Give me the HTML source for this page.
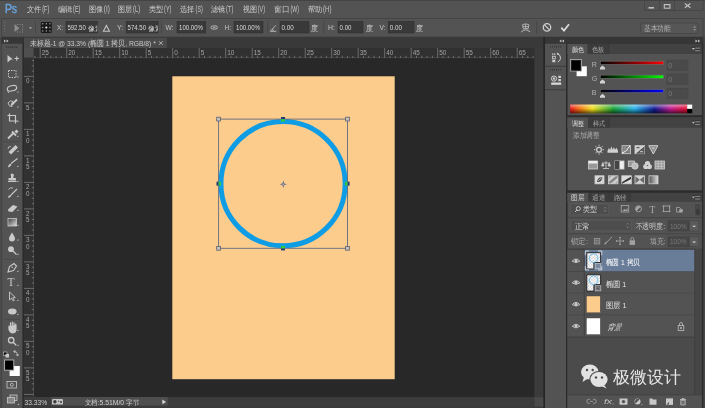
<!DOCTYPE html>
<html><head><meta charset="utf-8">
<style>
html,body{margin:0;padding:0;width:705px;height:408px;overflow:hidden;background:#535353;}
svg{display:block;will-change:transform;}
text{font-family:"Liberation Sans",sans-serif;}
</style></head><body>
<svg width="705" height="408" viewBox="0 0 705 408">
<rect x="0" y="0" width="705" height="408" fill="#535353"/>
<rect x="0" y="0" width="705" height="0.8" fill="#404040"/>
<text x="4.9" y="12.6" font-size="12.6" fill="#68a3dc" textLength="12.2" lengthAdjust="spacingAndGlyphs" stroke="#68a3dc" stroke-width="0.45">Ps</text>
<text x="26.9" y="11.9" font-size="7.9" fill="#cdcdcd" textLength="14.4" lengthAdjust="spacingAndGlyphs">文件</text>
<text x="42.2" y="12.1" font-size="8.2" fill="#c8c8c8" textLength="7.2" lengthAdjust="spacingAndGlyphs">(F)</text>
<text x="57.6" y="11.9" font-size="7.9" fill="#cdcdcd" textLength="14.6" lengthAdjust="spacingAndGlyphs">编辑</text>
<text x="73.1" y="12.1" font-size="8.2" fill="#c8c8c8" textLength="7.2" lengthAdjust="spacingAndGlyphs">(E)</text>
<text x="88.60000000000001" y="11.9" font-size="7.9" fill="#cdcdcd" textLength="14.3" lengthAdjust="spacingAndGlyphs">图像</text>
<text x="103.8" y="12.1" font-size="8.2" fill="#c8c8c8" textLength="6.0" lengthAdjust="spacingAndGlyphs">(I)</text>
<text x="118.2" y="11.9" font-size="7.9" fill="#cdcdcd" textLength="14.0" lengthAdjust="spacingAndGlyphs">图层</text>
<text x="133.1" y="12.1" font-size="8.2" fill="#c8c8c8" textLength="7.2" lengthAdjust="spacingAndGlyphs">(L)</text>
<text x="148.79999999999998" y="11.9" font-size="7.9" fill="#cdcdcd" textLength="14.4" lengthAdjust="spacingAndGlyphs">类型</text>
<text x="164.1" y="12.1" font-size="8.2" fill="#c8c8c8" textLength="7.2" lengthAdjust="spacingAndGlyphs">(Y)</text>
<text x="180.29999999999998" y="11.9" font-size="7.9" fill="#cdcdcd" textLength="14.4" lengthAdjust="spacingAndGlyphs">选择</text>
<text x="195.6" y="12.1" font-size="8.2" fill="#c8c8c8" textLength="7.2" lengthAdjust="spacingAndGlyphs">(S)</text>
<text x="211.0" y="11.9" font-size="7.9" fill="#cdcdcd" textLength="14.2" lengthAdjust="spacingAndGlyphs">滤镜</text>
<text x="226.1" y="12.1" font-size="8.2" fill="#c8c8c8" textLength="7.2" lengthAdjust="spacingAndGlyphs">(T)</text>
<text x="242.7" y="11.9" font-size="7.9" fill="#cdcdcd" textLength="14.2" lengthAdjust="spacingAndGlyphs">视图</text>
<text x="257.8" y="12.1" font-size="8.2" fill="#c8c8c8" textLength="7.2" lengthAdjust="spacingAndGlyphs">(V)</text>
<text x="274.2" y="11.9" font-size="7.9" fill="#cdcdcd" textLength="15.5" lengthAdjust="spacingAndGlyphs">窗口</text>
<text x="290.6" y="12.1" font-size="8.2" fill="#c8c8c8" textLength="8.4" lengthAdjust="spacingAndGlyphs">(W)</text>
<text x="307.7" y="11.9" font-size="7.9" fill="#cdcdcd" textLength="14.5" lengthAdjust="spacingAndGlyphs">帮助</text>
<text x="323.1" y="12.1" font-size="8.2" fill="#c8c8c8" textLength="8.4" lengthAdjust="spacingAndGlyphs">(H)</text>
<path d="M644.5 0 V10.5 H703 V0" fill="none" stroke="#474747"/>
<line x1="659.5" y1="0" x2="659.5" y2="10.5" stroke="#474747"/><line x1="674.5" y1="0" x2="674.5" y2="10.5" stroke="#474747"/>
<rect x="648.5" y="7" width="5.5" height="1.6" fill="#c0c0c0"/>
<rect x="664.3" y="4.6" width="5.6" height="3.6" fill="none" stroke="#c0c0c0" stroke-width="1.1"/><rect x="664" y="4.1" width="6.2" height="1" fill="#c0c0c0"/>
<path d="M684.8 3.6 L690.4 7.8 M690.4 3.6 L684.8 7.8" stroke="#c0c0c0" stroke-width="1.2"/>
<rect x="1.5" y="18.5" width="701.5" height="18.5" fill="#535353" stroke="#444" stroke-width="1"/>
<rect x="4" y="22" width="1.2" height="1" fill="#6e6e6e"/>
<rect x="4" y="25" width="1.2" height="1" fill="#6e6e6e"/>
<rect x="4" y="28" width="1.2" height="1" fill="#6e6e6e"/>
<rect x="4" y="31" width="1.2" height="1" fill="#6e6e6e"/>
<path d="M14.5 24 L14.5 32 L19.5 28.2 Z" fill="#8c8c8c"/>
<rect x="17" y="24" width="1" height="1" fill="#8a8a8a"/>
<rect x="19.5" y="24" width="1" height="1" fill="#8a8a8a"/>
<rect x="22" y="24" width="1" height="1" fill="#8a8a8a"/>
<rect x="22" y="26.5" width="1" height="1" fill="#8a8a8a"/>
<rect x="22" y="29" width="1" height="1" fill="#8a8a8a"/>
<rect x="17" y="31.5" width="1" height="1" fill="#8a8a8a"/>
<rect x="19.5" y="31.5" width="1" height="1" fill="#8a8a8a"/>
<rect x="22" y="31.5" width="1" height="1" fill="#8a8a8a"/>
<path d="M29 27.3 L32 27.3 L30.5 29 Z" fill="#b5b5b5"/>
<line x1="35.5" y1="21" x2="35.5" y2="34" stroke="#474747"/>
<rect x="40.8" y="21.9" width="11" height="11.1" rx="1.2" fill="#1a1a1a"/>
<circle cx="42.7" cy="23.8" r="0.75" fill="#9a9a9a"/>
<circle cx="46.3" cy="23.8" r="0.75" fill="#9a9a9a"/>
<circle cx="49.9" cy="23.8" r="0.75" fill="#9a9a9a"/>
<circle cx="42.7" cy="27.45" r="0.75" fill="#9a9a9a"/>
<circle cx="46.3" cy="27.45" r="1.05" fill="#f0f0f0"/>
<circle cx="49.9" cy="27.45" r="0.75" fill="#9a9a9a"/>
<circle cx="42.7" cy="31.1" r="0.75" fill="#9a9a9a"/>
<circle cx="46.3" cy="31.1" r="0.75" fill="#9a9a9a"/>
<circle cx="49.9" cy="31.1" r="0.75" fill="#9a9a9a"/>
<text x="57" y="30.2" font-size="7.2" fill="#c5c5c5" textLength="6" lengthAdjust="spacingAndGlyphs">X:</text>
<text x="117" y="30.2" font-size="7.2" fill="#c5c5c5" textLength="6.2" lengthAdjust="spacingAndGlyphs">Y:</text>
<text x="165.5" y="30.2" font-size="7.2" fill="#c5c5c5" textLength="8" lengthAdjust="spacingAndGlyphs">W:</text>
<text x="224.5" y="30.2" font-size="7.2" fill="#c5c5c5" textLength="6.5" lengthAdjust="spacingAndGlyphs">H:</text>
<text x="328" y="30.2" font-size="7.2" fill="#c5c5c5" textLength="6.8" lengthAdjust="spacingAndGlyphs">H:</text>
<rect x="66" y="21.5" width="31.5" height="11.5" fill="#393939" stroke="#2f2f2f" stroke-width="0.6"/>
<rect x="126.2" y="21.5" width="31.9" height="11.5" fill="#393939" stroke="#2f2f2f" stroke-width="0.6"/>
<rect x="177" y="21.5" width="28.7" height="11.5" fill="#393939" stroke="#2f2f2f" stroke-width="0.6"/>
<rect x="234" y="21.5" width="29" height="11.5" fill="#393939" stroke="#2f2f2f" stroke-width="0.6"/>
<rect x="280" y="21.5" width="29" height="11.5" fill="#393939" stroke="#2f2f2f" stroke-width="0.6"/>
<rect x="338" y="21.5" width="25" height="11.5" fill="#393939" stroke="#2f2f2f" stroke-width="0.6"/>
<rect x="388.3" y="21.5" width="25.7" height="11.5" fill="#393939" stroke="#2f2f2f" stroke-width="0.6"/>
<clipPath id="cx"><rect x="66" y="21" width="31.3" height="13"/></clipPath><clipPath id="cy"><rect x="126.2" y="21" width="31.7" height="13"/></clipPath>
<text x="67.4" y="30.4" font-size="7.8" fill="#dcdcdc" textLength="18.4" lengthAdjust="spacingAndGlyphs">592.50</text>
<text x="87.6" y="30.6" font-size="7.2" fill="#dcdcdc" textLength="14" lengthAdjust="spacingAndGlyphs" clip-path="url(#cx)">像素</text>
<text x="127.6" y="30.4" font-size="7.8" fill="#dcdcdc" textLength="18.4" lengthAdjust="spacingAndGlyphs">574.50</text>
<text x="148.2" y="30.6" font-size="7.2" fill="#dcdcdc" textLength="14" lengthAdjust="spacingAndGlyphs" clip-path="url(#cy)">像素</text>
<text x="179" y="30.4" font-size="7.8" fill="#dcdcdc" textLength="24" lengthAdjust="spacingAndGlyphs">100.00%</text>
<text x="236" y="30.4" font-size="7.8" fill="#dcdcdc" textLength="24" lengthAdjust="spacingAndGlyphs">100.00%</text>
<text x="281.5" y="30.4" font-size="7.8" fill="#dcdcdc" textLength="12.2" lengthAdjust="spacingAndGlyphs">0.00</text>
<text x="339.5" y="30.4" font-size="7.8" fill="#dcdcdc" textLength="12" lengthAdjust="spacingAndGlyphs">0.00</text>
<path d="M103.4 31.3 L106.4 25.4 L109.4 31.3 Z" fill="none" stroke="#c4c4c4" stroke-width="1.1"/>
<line x1="161.5" y1="21" x2="161.5" y2="34" stroke="#474747"/>
<rect x="211" y="26" width="6.4" height="3" rx="1.5" fill="none" stroke="#c4c4c4" stroke-width="0.9"/><line x1="213" y1="27.5" x2="215.4" y2="27.5" stroke="#c4c4c4" stroke-width="0.7"/>
<line x1="267.7" y1="21" x2="267.7" y2="34" stroke="#474747"/>
<path d="M270.3 31.3 L276.3 31.3 M270.3 31.3 L275.8 25.3 M273.2 31.3 A2.8 2.8 0 0 0 272.3 29" fill="none" stroke="#bdbdbd" stroke-width="0.9"/>
<text x="311" y="31" font-size="7.6" fill="#cdcdcd" textLength="7" lengthAdjust="spacingAndGlyphs">度</text>
<line x1="323.8" y1="21" x2="323.8" y2="34" stroke="#474747"/>
<text x="365.5" y="31" font-size="7.6" fill="#cdcdcd" textLength="7" lengthAdjust="spacingAndGlyphs">度</text>
<text x="379.4" y="30.2" font-size="7.2" fill="#c5c5c5" textLength="6" lengthAdjust="spacingAndGlyphs">V:</text>
<text x="389.8" y="30.4" font-size="7.8" fill="#dcdcdc" textLength="12.2" lengthAdjust="spacingAndGlyphs">0.00</text>
<text x="416.1" y="31" font-size="7.6" fill="#cdcdcd" textLength="7" lengthAdjust="spacingAndGlyphs">度</text>
<path d="M522.6 24.6 Q525.7 23.2 528.8 24.6 L528.2 28.8 Q525.7 28 523.2 28.8 Z M522.8 26.6 H528.6 M525.7 23.8 V28.4" fill="none" stroke="#c0c0c0" stroke-width="0.8"/>
<path d="M521.2 32 Q525.7 27.6 530.2 32" fill="none" stroke="#c8c8c8" stroke-width="0.9"/>
<line x1="536.8" y1="21" x2="536.8" y2="34" stroke="#474747"/>
<circle cx="547" cy="27.4" r="3.7" fill="none" stroke="#cdcdcd" stroke-width="1.3"/><line x1="544.5" y1="24.9" x2="549.5" y2="29.9" stroke="#cdcdcd" stroke-width="1.3"/>
<path d="M561.3 27.6 L564 30.6 L569 24.3" fill="none" stroke="#dcdcdc" stroke-width="1.7"/>
<rect x="640.5" y="23" width="57.5" height="10.5" rx="1" fill="#565656" stroke="#444444" stroke-width="0.8"/>
<text x="644" y="31.3" font-size="7.8" fill="#b0b0b0" textLength="26.5" lengthAdjust="spacingAndGlyphs">基本功能</text>
<path d="M693.4 27.4 l1.3 -1.5 l1.3 1.5z M693.4 29.2 l1.3 1.5 l1.3 -1.5z" fill="#a8a8a8"/>
<rect x="0" y="37" width="705" height="371" fill="#2a2a2a"/>
<rect x="0" y="37" width="1.7" height="371" fill="#4a4a4a"/><rect x="1.7" y="37" width="21.8" height="6.6" fill="#363636"/>
<path d="M4 39.5 l2 1.5 l-2 1.5 z M6.6 39.5 l2 1.5 l-2 1.5 z" fill="#c8c8c8"/>
<rect x="1.7" y="43.6" width="20.8" height="364.4" fill="#535353"/><line x1="2" y1="43.6" x2="2" y2="408" stroke="#474747" stroke-width="0.6"/>
<line x1="22.7" y1="44" x2="22.7" y2="408" stroke="#3a3a3a" stroke-width="0.8"/>
<rect x="6" y="46.5" width="1.4" height="1.4" fill="#3a3a3a"/>
<rect x="8" y="46.5" width="1.4" height="1.4" fill="#3a3a3a"/>
<rect x="10" y="46.5" width="1.4" height="1.4" fill="#3a3a3a"/>
<rect x="12" y="46.5" width="1.4" height="1.4" fill="#3a3a3a"/>
<rect x="14" y="46.5" width="1.4" height="1.4" fill="#3a3a3a"/>
<rect x="16" y="46.5" width="1.4" height="1.4" fill="#3a3a3a"/>
<path d="M7.5 55 L7.5 62.5 L11 59.5 L13 59.5 Z" fill="#c9c9c9"/><path d="M14.5 58.5 H19 M16.75 56.3 V60.8" stroke="#c9c9c9" stroke-width="1"/>
<rect x="8.5" y="70.5" width="7.5" height="7" fill="none" stroke="#c9c9c9" stroke-width="1" stroke-dasharray="1.4 1.1"/>
<ellipse cx="12" cy="88.3" rx="4.8" ry="2.6" fill="none" stroke="#c9c9c9" stroke-width="1.1" transform="rotate(-15 12 88.3)"/><path d="M8 90 Q7.5 92 9 93" fill="none" stroke="#c9c9c9" stroke-width="0.9"/>
<path d="M8 103 Q10 99.5 13 101.5 Q10 104.5 12 106.5 Q9 107 8 103Z" fill="none" stroke="#c9c9c9" stroke-width="0.9"/><path d="M11.5 105 L17 99.5" stroke="#c9c9c9" stroke-width="1.8"/>
<path d="M9.5 113.5 V121 H17.5 M7.5 115.5 H15.5 V123.5" fill="none" stroke="#c9c9c9" stroke-width="1.2"/>
<path d="M8 138.5 L13.5 133 M12 131.5 L16 135.5" stroke="#c9c9c9" stroke-width="1.8"/><path d="M14.5 131.5 l2 -2 l2 2 l-2 2z" fill="#c9c9c9"/>
<line x1="4" y1="141.6" x2="20" y2="141.6" stroke="#474747" stroke-width="0.8"/>
<path d="M8.5 152 L15.5 145 L18 147.5 L11 154.5 Z" fill="#c9c9c9"/><path d="M8 149 Q8 146 11 146.5" fill="none" stroke="#c9c9c9" stroke-width="0.8"/>
<g transform="translate(0 1.5)"><path d="M11 162 L17.5 157" stroke="#c9c9c9" stroke-width="1.1"/><path d="M8 166 Q8.5 162 11.2 162.3 Q12 164.5 8 166Z" fill="#c9c9c9"/></g>
<g transform="translate(0 2)"><rect x="11" y="173" width="2.4" height="3" fill="#c9c9c9"/><circle cx="12.2" cy="173" r="1.6" fill="#c9c9c9"/><rect x="8.5" y="176" width="7.5" height="2.5" rx="0.6" fill="#c9c9c9"/><rect x="8" y="179" width="8.5" height="1" fill="#c9c9c9"/></g>
<path d="M8.5 189.5 Q10 187 13 188" fill="none" stroke="#c9c9c9" stroke-width="0.9"/><path d="M11 195 L17 189" stroke="#c9c9c9" stroke-width="1.1"/><path d="M8 198 Q8.5 194.5 11 195 Q11.5 197 8 198Z" fill="#c9c9c9"/>
<g transform="translate(0 1.5)"><path d="M8 208 L13 203.5 L17.5 205 L12.5 210.5 L8.5 210Z" fill="#c9c9c9"/></g>
<defs><linearGradient id="gr" x1="0" y1="0" x2="1" y2="1"><stop offset="0" stop-color="#3a3a3a"/><stop offset="1" stop-color="#e0e0e0"/></linearGradient></defs>
<rect x="8" y="218.5" width="8.5" height="7.5" fill="url(#gr)" stroke="#c9c9c9" stroke-width="0.8"/>
<path d="M12 232.5 Q9 237 9 238.5 A3 3 0 0 0 15 238.5 Q15 237 12 232.5Z" fill="#c9c9c9"/>
<circle cx="11" cy="249.2" r="2.9" fill="#c9c9c9"/><path d="M13 251 L16.5 254.5" stroke="#c9c9c9" stroke-width="1.2"/>
<line x1="4" y1="259.4" x2="20" y2="259.4" stroke="#474747" stroke-width="0.8"/>
<path d="M8 272 L9.5 266.5 L14 263.5 L16.5 266 L13.5 270.5 Z" fill="none" stroke="#c9c9c9" stroke-width="1.1"/><circle cx="12.2" cy="267.3" r="0.8" fill="#c9c9c9"/>
<text x="7.6" y="285.6" font-size="11.5" fill="#c9c9c9" style="font-family:'Liberation Serif',serif">T</text>
<path d="M9.5 292 L9.5 300 L11.5 298.2 L13.2 301 L14.3 300.3 L12.8 297.7 L15.3 297.5 Z" fill="#555" stroke="#c9c9c9" stroke-width="0.9"/>
<ellipse cx="12.3" cy="311.5" rx="4.3" ry="2.9" fill="#c9c9c9"/>
<line x1="4" y1="319.4" x2="20" y2="319.4" stroke="#474747" stroke-width="0.8"/>
<path d="M9 326 V329.5 Q10 332.5 13 333 Q16 332.5 16 329 V325 M10.5 329 V322.8 M12.3 329 V322 M14 329 V322.8 M15.7 329 V324" fill="#c9c9c9" stroke="#c9c9c9" stroke-width="1.2" stroke-linecap="round"/>
<circle cx="11.2" cy="340.2" r="2.7" fill="none" stroke="#c9c9c9" stroke-width="1.3"/><path d="M13.2 342.2 L16.2 345.2" stroke="#c9c9c9" stroke-width="1.4"/>
<rect x="3.5" y="352" width="3.5" height="3.5" fill="#111" stroke="#c9c9c9" stroke-width="0.6"/><rect x="5.5" y="354" width="3.5" height="3.5" fill="#c9c9c9"/>
<path d="M14.5 351.5 Q17.5 351.5 17.5 355 M13.5 351.5 l1.5 -1 v2z M17.5 356 l-1 -1.2 h2z" fill="none" stroke="#c9c9c9" stroke-width="0.8"/>
<rect x="9.6" y="366" width="10.2" height="10" fill="#fff"/>
<rect x="4.6" y="360" width="9.2" height="10.2" fill="#000" stroke="#b8b8b8" stroke-width="0.9"/>
<rect x="7" y="381.5" width="9.5" height="6.5" fill="none" stroke="#c9c9c9" stroke-width="0.8"/><circle cx="11.8" cy="384.8" r="1.5" fill="none" stroke="#c9c9c9" stroke-width="0.8"/>
<rect x="10" y="395" width="7" height="5.5" fill="#666" stroke="#c9c9c9" stroke-width="0.8"/><rect x="7.5" y="397.5" width="7" height="5.5" fill="#888" stroke="#c9c9c9" stroke-width="0.8"/>
<path d="M16.8 77.5 h1.6 v-1.6z" fill="#cfcfcf"/>
<path d="M16.8 92.5 h1.6 v-1.6z" fill="#cfcfcf"/>
<path d="M16.8 107.5 h1.6 v-1.6z" fill="#cfcfcf"/>
<path d="M16.8 122 h1.6 v-1.6z" fill="#cfcfcf"/>
<path d="M16.8 137 h1.6 v-1.6z" fill="#cfcfcf"/>
<path d="M16.8 152 h1.6 v-1.6z" fill="#cfcfcf"/>
<path d="M16.8 167 h1.6 v-1.6z" fill="#cfcfcf"/>
<path d="M16.8 182 h1.6 v-1.6z" fill="#cfcfcf"/>
<path d="M16.8 197 h1.6 v-1.6z" fill="#cfcfcf"/>
<path d="M16.8 211 h1.6 v-1.6z" fill="#cfcfcf"/>
<path d="M16.8 226 h1.6 v-1.6z" fill="#cfcfcf"/>
<path d="M16.8 240.5 h1.6 v-1.6z" fill="#cfcfcf"/>
<path d="M16.8 255 h1.6 v-1.6z" fill="#cfcfcf"/>
<path d="M16.8 272 h1.6 v-1.6z" fill="#cfcfcf"/>
<path d="M16.8 286 h1.6 v-1.6z" fill="#cfcfcf"/>
<path d="M16.8 301 h1.6 v-1.6z" fill="#cfcfcf"/>
<path d="M16.8 315 h1.6 v-1.6z" fill="#cfcfcf"/>
<path d="M16.8 331 h1.6 v-1.6z" fill="#cfcfcf"/>
<path d="M16.8 346 h1.6 v-1.6z" fill="#cfcfcf"/>
<path d="M17.5 405 h1.6 v-1.6z" fill="#cfcfcf"/>
<rect x="24" y="37" width="519.5" height="11" fill="#393939"/>
<rect x="24" y="37.8" width="142.8" height="10.2" fill="#4b4b4b"/>
<text x="29.8" y="46.2" font-size="7.8" fill="#cacaca" textLength="126" lengthAdjust="spacingAndGlyphs">未标题-1 @ 33.3% (椭圆 1 拷贝, RGB/8) *</text>
<path d="M159 41.3 L162.6 44.9 M162.6 41.3 L159 44.9" stroke="#c4c4c4" stroke-width="0.85"/>
<rect x="24" y="48" width="510.4" height="10" fill="#313131"/>
<rect x="24" y="58" width="10" height="339" fill="#313131"/>
<rect x="24" y="48" width="9.6" height="9.6" fill="#4f4f4f"/>
<line x1="33.8" y1="58" x2="534.4" y2="58" stroke="#5a5a5a" stroke-width="0.8"/>
<line x1="33.8" y1="58" x2="33.8" y2="397" stroke="#5a5a5a" stroke-width="0.8"/>
<path d="M34.90 55.8 V58 M40.20 48 V58 M45.50 55.8 V58 M50.80 55.8 V58 M56.10 55.8 V58 M61.40 55.8 V58 M66.70 48 V58 M72.00 55.8 V58 M77.30 55.8 V58 M82.60 55.8 V58 M87.90 55.8 V58 M93.20 48 V58 M98.50 55.8 V58 M103.80 55.8 V58 M109.10 55.8 V58 M114.40 55.8 V58 M119.70 48 V58 M125.00 55.8 V58 M130.30 55.8 V58 M135.60 55.8 V58 M140.90 55.8 V58 M146.20 48 V58 M151.50 55.8 V58 M156.80 55.8 V58 M162.10 55.8 V58 M167.40 55.8 V58 M172.70 48 V58 M178.00 55.8 V58 M183.30 55.8 V58 M188.60 55.8 V58 M193.90 55.8 V58 M199.20 48 V58 M204.50 55.8 V58 M209.80 55.8 V58 M215.10 55.8 V58 M220.40 55.8 V58 M225.70 48 V58 M231.00 55.8 V58 M236.30 55.8 V58 M241.60 55.8 V58 M246.90 55.8 V58 M252.20 48 V58 M257.50 55.8 V58 M262.80 55.8 V58 M268.10 55.8 V58 M273.40 55.8 V58 M278.70 48 V58 M284.00 55.8 V58 M289.30 55.8 V58 M294.60 55.8 V58 M299.90 55.8 V58 M305.20 48 V58 M310.50 55.8 V58 M315.80 55.8 V58 M321.10 55.8 V58 M326.40 55.8 V58 M331.70 48 V58 M337.00 55.8 V58 M342.30 55.8 V58 M347.60 55.8 V58 M352.90 55.8 V58 M358.20 48 V58 M363.50 55.8 V58 M368.80 55.8 V58 M374.10 55.8 V58 M379.40 55.8 V58 M384.70 48 V58 M390.00 55.8 V58 M395.30 55.8 V58 M400.60 55.8 V58 M405.90 55.8 V58 M411.20 48 V58 M416.50 55.8 V58 M421.80 55.8 V58 M427.10 55.8 V58 M432.40 55.8 V58 M437.70 48 V58 M443.00 55.8 V58 M448.30 55.8 V58 M453.60 55.8 V58 M458.90 55.8 V58 M464.20 48 V58 M469.50 55.8 V58 M474.80 55.8 V58 M480.10 55.8 V58 M485.40 55.8 V58 M490.70 48 V58 M496.00 55.8 V58 M501.30 55.8 V58 M506.60 55.8 V58 M511.90 55.8 V58 M517.20 48 V58 M522.50 55.8 V58 M527.80 55.8 V58 M533.10 55.8 V58" stroke="#7a7a7a" stroke-width="0.8"/>
<text x="41.7" y="55.3" font-size="6.4" fill="#a4a4a4">25</text>
<text x="68.2" y="55.3" font-size="6.4" fill="#a4a4a4">20</text>
<text x="94.7" y="55.3" font-size="6.4" fill="#a4a4a4">15</text>
<text x="121.2" y="55.3" font-size="6.4" fill="#a4a4a4">10</text>
<text x="147.7" y="55.3" font-size="6.4" fill="#a4a4a4">5</text>
<text x="174.2" y="55.3" font-size="6.4" fill="#a4a4a4">0</text>
<text x="200.7" y="55.3" font-size="6.4" fill="#a4a4a4">5</text>
<text x="227.2" y="55.3" font-size="6.4" fill="#a4a4a4">10</text>
<text x="253.7" y="55.3" font-size="6.4" fill="#a4a4a4">15</text>
<text x="280.2" y="55.3" font-size="6.4" fill="#a4a4a4">20</text>
<text x="306.7" y="55.3" font-size="6.4" fill="#a4a4a4">25</text>
<text x="333.2" y="55.3" font-size="6.4" fill="#a4a4a4">30</text>
<text x="359.7" y="55.3" font-size="6.4" fill="#a4a4a4">35</text>
<text x="386.2" y="55.3" font-size="6.4" fill="#a4a4a4">40</text>
<text x="412.7" y="55.3" font-size="6.4" fill="#a4a4a4">45</text>
<text x="439.2" y="55.3" font-size="6.4" fill="#a4a4a4">50</text>
<text x="465.7" y="55.3" font-size="6.4" fill="#a4a4a4">55</text>
<text x="492.2" y="55.3" font-size="6.4" fill="#a4a4a4">60</text>
<text x="518.7" y="55.3" font-size="6.4" fill="#a4a4a4">65</text>
<path d="M31.8 60.50 H34 M31.8 65.80 H34 M31.8 71.10 H34 M24 76.40 H34 M31.8 81.70 H34 M31.8 87.00 H34 M31.8 92.30 H34 M31.8 97.60 H34 M24 102.90 H34 M31.8 108.20 H34 M31.8 113.50 H34 M31.8 118.80 H34 M31.8 124.10 H34 M24 129.40 H34 M31.8 134.70 H34 M31.8 140.00 H34 M31.8 145.30 H34 M31.8 150.60 H34 M24 155.90 H34 M31.8 161.20 H34 M31.8 166.50 H34 M31.8 171.80 H34 M31.8 177.10 H34 M24 182.40 H34 M31.8 187.70 H34 M31.8 193.00 H34 M31.8 198.30 H34 M31.8 203.60 H34 M24 208.90 H34 M31.8 214.20 H34 M31.8 219.50 H34 M31.8 224.80 H34 M31.8 230.10 H34 M24 235.40 H34 M31.8 240.70 H34 M31.8 246.00 H34 M31.8 251.30 H34 M31.8 256.60 H34 M24 261.90 H34 M31.8 267.20 H34 M31.8 272.50 H34 M31.8 277.80 H34 M31.8 283.10 H34 M24 288.40 H34 M31.8 293.70 H34 M31.8 299.00 H34 M31.8 304.30 H34 M31.8 309.60 H34 M24 314.90 H34 M31.8 320.20 H34 M31.8 325.50 H34 M31.8 330.80 H34 M31.8 336.10 H34 M24 341.40 H34 M31.8 346.70 H34 M31.8 352.00 H34 M31.8 357.30 H34 M31.8 362.60 H34 M24 367.90 H34 M31.8 373.20 H34 M31.8 378.50 H34 M31.8 383.80 H34 M31.8 389.10 H34 M24 394.40 H34" stroke="#7a7a7a" stroke-width="0.8"/>
<text x="25.9" y="83.2" font-size="6.3" fill="#a4a4a4">0</text>
<text x="25.9" y="109.7" font-size="6.3" fill="#a4a4a4">5</text>
<text x="25.9" y="136.2" font-size="6.3" fill="#a4a4a4">1</text>
<text x="25.9" y="142.5" font-size="6.3" fill="#a4a4a4">0</text>
<text x="25.9" y="162.7" font-size="6.3" fill="#a4a4a4">1</text>
<text x="25.9" y="169.0" font-size="6.3" fill="#a4a4a4">5</text>
<text x="25.9" y="189.2" font-size="6.3" fill="#a4a4a4">2</text>
<text x="25.9" y="195.5" font-size="6.3" fill="#a4a4a4">0</text>
<text x="25.9" y="215.7" font-size="6.3" fill="#a4a4a4">2</text>
<text x="25.9" y="222.0" font-size="6.3" fill="#a4a4a4">5</text>
<text x="25.9" y="242.2" font-size="6.3" fill="#a4a4a4">3</text>
<text x="25.9" y="248.5" font-size="6.3" fill="#a4a4a4">0</text>
<text x="25.9" y="268.7" font-size="6.3" fill="#a4a4a4">3</text>
<text x="25.9" y="275.0" font-size="6.3" fill="#a4a4a4">5</text>
<text x="25.9" y="295.2" font-size="6.3" fill="#a4a4a4">4</text>
<text x="25.9" y="301.5" font-size="6.3" fill="#a4a4a4">0</text>
<text x="25.9" y="321.7" font-size="6.3" fill="#a4a4a4">4</text>
<text x="25.9" y="328.0" font-size="6.3" fill="#a4a4a4">5</text>
<text x="25.9" y="348.2" font-size="6.3" fill="#a4a4a4">5</text>
<text x="25.9" y="354.5" font-size="6.3" fill="#a4a4a4">0</text>
<text x="25.9" y="374.7" font-size="6.3" fill="#a4a4a4">5</text>
<text x="25.9" y="381.0" font-size="6.3" fill="#a4a4a4">5</text>
<rect x="34.2" y="58.2" width="499.3" height="338.8" fill="#282828"/>
<rect x="534.4" y="48" width="9.1" height="349" fill="#3b3b3b"/>
<rect x="24" y="397" width="519.5" height="11" fill="#3a3a3a"/>
<rect x="24" y="397" width="144" height="8.6" fill="#3d3d3d"/>
<rect x="50.9" y="397" width="116.9" height="8.6" fill="#4e4e4e"/>
<text x="24.5" y="405.3" font-size="7.2" fill="#cfcfcf" textLength="22.7" lengthAdjust="spacingAndGlyphs">33.33%</text>
<rect x="52" y="399" width="11" height="5.6" rx="1.2" fill="#c4c4c4"/><circle cx="54.9" cy="401.8" r="1.7" fill="#3a3a3a"/><path d="M58.3 400.3 l1.2 1 l-1.2 1z M60 401.2 h2 v1.6 h-2z" fill="#3a3a3a"/>
<text x="84.7" y="405.3" font-size="7.4" fill="#d2d2d2" textLength="54.3" lengthAdjust="spacingAndGlyphs">文档:5.51M/0 字节</text>
<path d="M162.3 399.5 L166 401.9 L162.3 404.3 Z" fill="#d8d8d8"/>
<rect x="168" y="397.3" width="365.5" height="9.3" fill="#3c3c3c"/>
<rect x="534.4" y="397.3" width="9.1" height="9.3" fill="#4a4a4a"/>
<rect x="172.3" y="76.3" width="222.4" height="302.9" fill="#fbcc8c"/>
<circle cx="283.05" cy="183.7" r="62.1" fill="none" stroke="#0e9ce5" stroke-width="5.0"/>
<rect x="218.6" y="119.1" width="128.9" height="129.2" fill="none" stroke="#656b80" stroke-width="0.9"/>
<rect x="216.7" y="117.19999999999999" width="3.8" height="3.8" fill="#c8c0b0" stroke="#5a6078" stroke-width="0.8"/>
<rect x="345.6" y="117.19999999999999" width="3.8" height="3.8" fill="#c8c0b0" stroke="#5a6078" stroke-width="0.8"/>
<rect x="216.7" y="246.4" width="3.8" height="3.8" fill="#c8c0b0" stroke="#5a6078" stroke-width="0.8"/>
<rect x="345.6" y="246.4" width="3.8" height="3.8" fill="#c8c0b0" stroke="#5a6078" stroke-width="0.8"/>
<rect x="281" y="117" width="4" height="2.1" fill="#243a78"/><rect x="281" y="119.1" width="4" height="2.4" fill="#34c83c"/>
<rect x="281" y="248.3" width="4" height="2.1" fill="#243a78"/><rect x="281" y="245.9" width="4" height="2.4" fill="#34c83c"/>
<rect x="216.5" y="181.7" width="2.1" height="4" fill="#243a78"/><rect x="218.6" y="181.7" width="2.4" height="4" fill="#34c83c"/>
<rect x="347.5" y="181.7" width="2.1" height="4" fill="#243a78"/><rect x="345.1" y="181.7" width="2.4" height="4" fill="#34c83c"/>
<path d="M283.3 180.6 L284.1 183.5 L286.9 184.3 L284.1 185.1 L283.3 188 L282.5 185.1 L279.7 184.3 L282.5 183.5 Z" fill="#55608a"/><circle cx="283.3" cy="184.3" r="1.2" fill="#c9b9a0" stroke="#55608a" stroke-width="0.6"/>
<rect x="543.5" y="37" width="1.6" height="371" fill="#262626"/>
<rect x="545" y="37" width="160" height="6.6" fill="#363636"/>
<path d="M564 39.5 l-2 1.5 l2 1.5 z M561.4 39.5 l-2 1.5 l2 1.5 z" fill="#c8c8c8"/>
<rect x="545" y="43.6" width="21.1" height="364.4" fill="#535353"/>
<line x1="545" y1="66.3" x2="566" y2="66.3" stroke="#3c3c3c" stroke-width="1"/>
<line x1="545" y1="89.8" x2="566" y2="89.8" stroke="#3c3c3c" stroke-width="1"/>
<rect x="550" y="46.3" width="1" height="1" fill="#2c2c2c"/><rect x="550" y="69.3" width="1" height="1" fill="#2c2c2c"/>
<rect x="552" y="46.3" width="1" height="1" fill="#2c2c2c"/><rect x="552" y="69.3" width="1" height="1" fill="#2c2c2c"/>
<rect x="554" y="46.3" width="1" height="1" fill="#2c2c2c"/><rect x="554" y="69.3" width="1" height="1" fill="#2c2c2c"/>
<rect x="556" y="46.3" width="1" height="1" fill="#2c2c2c"/><rect x="556" y="69.3" width="1" height="1" fill="#2c2c2c"/>
<rect x="558" y="46.3" width="1" height="1" fill="#2c2c2c"/><rect x="558" y="69.3" width="1" height="1" fill="#2c2c2c"/>
<rect x="560" y="46.3" width="1" height="1" fill="#2c2c2c"/><rect x="560" y="69.3" width="1" height="1" fill="#2c2c2c"/>
<g fill="#d0d0d0"><rect x="552.3" y="53.2" width="1" height="2"/><rect x="554.3" y="53.2" width="1" height="2"/><rect x="552.5" y="56.3" width="2.8" height="2.5" fill="none" stroke="#d0d0d0" stroke-width="0.8"/><rect x="552.3" y="59.8" width="3" height="2.4"/></g>
<path d="M557.5 53.8 Q561 55 560.5 58.5 Q560 61 557.8 62" fill="none" stroke="#d0d0d0" stroke-width="1"/><path d="M557 52.5 l2 1.2 l-2 1.2z" fill="#d0d0d0"/>
<circle cx="554" cy="78.6" r="2.6" fill="none" stroke="#d0d0d0" stroke-width="1"/><rect x="552.8" y="77.6" width="2.4" height="2" fill="#d0d0d0"/><rect x="558.3" y="75.8" width="2.6" height="2.2" fill="#d0d0d0"/><rect x="558.3" y="79" width="2.6" height="2.2" fill="#d0d0d0"/><rect x="551.2" y="82.5" width="10" height="2.3" fill="#d8d8d8"/>
<rect x="566.1" y="43.6" width="1.5" height="364.4" fill="#2a2a2a"/>
<path d="M695.5 39.5 l2 1.5 l-2 1.5 z M698.1 39.5 l2 1.5 l-2 1.5 z" fill="#c8c8c8"/>
<rect x="702.3" y="43.6" width="2.7" height="364.4" fill="#2a2a2a"/>
<rect x="567.5" y="43.8" width="134.8" height="71.7" fill="#535353"/>
<rect x="567.5" y="44" width="134.8" height="10" fill="#424242"/>
<rect x="567.5" y="44" width="20.1" height="10" fill="#535353"/>
<rect x="587.6" y="44" width="21.2" height="10" fill="#3c3c3c"/>
<line x1="608.8" y1="44" x2="608.8" y2="54" stroke="#373737" stroke-width="0.8"/>
<path d="M691.9 48.1 h3 l-1.5 1.9z" fill="#bdbdbd"/><path d="M692.2 47.4 H694.7 M695.2 47.0 H700 M695.2 49.7 H700" stroke="#2a2a2a" stroke-width="0.7"/><path d="M695.2 48.1 H700 M695.2 50.7 H700" stroke="#8c8c8c" stroke-width="1"/>
<text x="571.8" y="51.6" font-size="6.8" fill="#dcdcdc" textLength="12.3" lengthAdjust="spacingAndGlyphs">颜色</text>
<text x="592" y="51.6" font-size="6.8" fill="#a8a8a8" textLength="12.6" lengthAdjust="spacingAndGlyphs">色板</text>
<rect x="576.6" y="66.3" width="10.2" height="9.9" fill="#ffffff"/>
<rect x="570.5" y="59.5" width="11" height="11.5" fill="#000" stroke="#a8a8a8" stroke-width="0.9"/>
<rect x="571.3" y="60.3" width="9.4" height="9.9" fill="#000" stroke="#3a3a3a" stroke-width="0.5"/>
<defs><linearGradient id="gR" x1="0" x2="1" y1="0" y2="0"><stop offset="0" stop-color="#000"/><stop offset="1" stop-color="#ff0000"/></linearGradient></defs>
<rect x="600.3" y="61.2" width="63.2" height="3.2" fill="url(#gR)" stroke="#6e6e6e" stroke-width="0.6"/>
<text x="591.8" y="67.1" font-size="7" fill="#b2b2b2">R</text>
<path d="M600 69.5 V67.7 L602.5 65.5 L605 67.7 V69.5 Z" fill="#d2d2d2"/>
<rect x="667" y="60.0" width="21" height="10.3" fill="#4a4a4a" stroke="#454545" stroke-width="0.6"/>
<text x="668.3" y="68.1" font-size="7.2" fill="#7a7a7a">0</text>
<defs><linearGradient id="gG" x1="0" x2="1" y1="0" y2="0"><stop offset="0" stop-color="#000"/><stop offset="1" stop-color="#00ff00"/></linearGradient></defs>
<rect x="600.3" y="75.10000000000001" width="63.2" height="3.2" fill="url(#gG)" stroke="#6e6e6e" stroke-width="0.6"/>
<text x="591.8" y="81.0" font-size="7" fill="#b2b2b2">G</text>
<path d="M600 83.4 V81.60000000000001 L602.5 79.4 L605 81.60000000000001 V83.4 Z" fill="#d2d2d2"/>
<rect x="667" y="73.9" width="21" height="10.3" fill="#4a4a4a" stroke="#454545" stroke-width="0.6"/>
<text x="668.3" y="82.0" font-size="7.2" fill="#7a7a7a">0</text>
<defs><linearGradient id="gB" x1="0" x2="1" y1="0" y2="0"><stop offset="0" stop-color="#000"/><stop offset="1" stop-color="#0000ff"/></linearGradient></defs>
<rect x="600.3" y="89.4" width="63.2" height="3.2" fill="url(#gB)" stroke="#6e6e6e" stroke-width="0.6"/>
<text x="591.8" y="95.3" font-size="7" fill="#b2b2b2">B</text>
<path d="M600 97.7 V95.9 L602.5 93.7 L605 95.9 V97.7 Z" fill="#d2d2d2"/>
<rect x="667" y="88.2" width="21" height="10.3" fill="#4a4a4a" stroke="#454545" stroke-width="0.6"/>
<text x="668.3" y="96.3" font-size="7.2" fill="#7a7a7a">0</text>
<defs><linearGradient id="spec" x1="0" x2="1" y1="0" y2="0"><stop offset="0" stop-color="#e81818"/><stop offset="0.09" stop-color="#f07a10"/><stop offset="0.19" stop-color="#f0e020"/><stop offset="0.37" stop-color="#18a038"/><stop offset="0.55" stop-color="#28b0e8"/><stop offset="0.72" stop-color="#101c90"/><stop offset="0.86" stop-color="#c01c8c"/><stop offset="1" stop-color="#e01030"/></linearGradient><linearGradient id="specv" x1="0" x2="0" y1="0" y2="1"><stop offset="0" stop-color="#fff" stop-opacity="0.5"/><stop offset="0.5" stop-color="#fff" stop-opacity="0"/><stop offset="0.5" stop-color="#000" stop-opacity="0"/><stop offset="1" stop-color="#000" stop-opacity="0.6"/></linearGradient></defs>
<rect x="570.2" y="104.6" width="117" height="8.6" fill="url(#spec)"/>
<rect x="570.2" y="104.6" width="117" height="8.6" fill="url(#specv)"/>
<rect x="687.2" y="104.6" width="5" height="4.3" fill="#fff"/><rect x="687.2" y="108.9" width="5" height="4.3" fill="#000"/>
<rect x="567.5" y="115.5" width="135" height="2" fill="#2c2c2c"/>
<rect x="567.5" y="117.5" width="134.8" height="73.1" fill="#535353"/>
<rect x="567.5" y="117.6" width="134.8" height="10.2" fill="#424242"/>
<rect x="567.5" y="117.6" width="20.5" height="10.2" fill="#535353"/>
<rect x="588" y="117.6" width="21.3" height="10.2" fill="#3c3c3c"/>
<line x1="609.3" y1="117.6" x2="609.3" y2="127.8" stroke="#373737" stroke-width="0.8"/>
<path d="M691.9 121.79999999999998 h3 l-1.5 1.9z" fill="#bdbdbd"/><path d="M692.2 121.1 H694.7 M695.2 120.69999999999999 H700 M695.2 123.39999999999999 H700" stroke="#2a2a2a" stroke-width="0.7"/><path d="M695.2 121.79999999999998 H700 M695.2 124.39999999999999 H700" stroke="#8c8c8c" stroke-width="1"/>
<text x="572.2" y="125.9" font-size="6.8" fill="#dcdcdc" textLength="11.9" lengthAdjust="spacingAndGlyphs">调整</text>
<text x="592.7" y="125.9" font-size="6.8" fill="#a8a8a8" textLength="12.3" lengthAdjust="spacingAndGlyphs">样式</text>
<text x="573" y="138.1" font-size="8.2" fill="#ababab" textLength="26.8" lengthAdjust="spacingAndGlyphs">添加调整</text>
<circle cx="599" cy="149.7" r="2.4" fill="none" stroke="#d2d2d2" stroke-width="1.2"/><path d="M599 144.7 V146.2 M599 153.2 V154.7 M594 149.7 H595.5 M602.5 149.7 H604 M595.5 146.2 l1 1 M602.5 146.2 l-1 1 M595.5 153.2 l1 -1 M602.5 153.2 l-1 -1" stroke="#d2d2d2" stroke-width="0.9"/>
<path d="M607.5 152.7 V150.7 L609 147.7 L610 150.2 L611.5 146.2 L612.5 149.7 L614 147.2 L615 149.7 L616.5 147.7 L618 150.7 V152.7 Z" fill="#d2d2d2"/>
<rect x="622" y="145.7" width="8.5" height="8" fill="#777" stroke="#d2d2d2" stroke-width="0.8"/><path d="M622 153.2 Q627 151.7 630 145.7" fill="none" stroke="#fff" stroke-width="1"/><path d="M622 148.2 H630.5 M622 150.89999999999998 H630.5 M625 145.7 V153.7" stroke="#aaa" stroke-width="0.5"/>
<rect x="635" y="145.7" width="9.5" height="8" fill="#cfcfcf" stroke="#d2d2d2" stroke-width="0.8"/><path d="M635 153.7 L644.5 145.7 V153.7 Z" fill="#5a5a5a"/><path d="M635 153.7 L644.5 145.7" stroke="#eee" stroke-width="0.8"/><path d="M636.5 147.7 h3" stroke="#333" stroke-width="0.9"/><path d="M640 151.7 h3" stroke="#ddd" stroke-width="0.9"/>
<path d="M648.8 145.7 H657.8 L653.3 154.0 Z" fill="#888" stroke="#d2d2d2" stroke-width="1"/><path d="M651.5 147.2 H655 L653.3 150.2Z" fill="#bbb"/>
<rect x="588.5" y="161" width="9" height="8" fill="#999" stroke="#d2d2d2" stroke-width="0.8"/><rect x="588.5" y="161" width="9" height="2.5" fill="#eee"/>
<path d="M606 161 V168 M602 163 H610 M601.5 166 L602.8 163 L604 166 Z M608 166 L609.3 163 L610.5 166 Z M603 168.5 H609" fill="#d2d2d2" stroke="#d2d2d2" stroke-width="0.8"/>
<rect x="615" y="161" width="9" height="8" fill="#eee" stroke="#d2d2d2" stroke-width="0.8"/><rect x="615" y="161" width="4.5" height="8" fill="#444"/>
<rect x="628.3" y="161" width="6" height="5.5" fill="#999" stroke="#d2d2d2" stroke-width="0.8"/><circle cx="635" cy="166" r="3.2" fill="#bbb" stroke="#d2d2d2" stroke-width="0.8"/>
<circle cx="647.5" cy="163.5" r="2.6" fill="#d2d2d2"/><circle cx="645.8" cy="166.5" r="2.6" fill="#d2d2d2"/><circle cx="649.3" cy="166.5" r="2.6" fill="#d2d2d2"/><path d="M646.5 165 l1 1.3 l1 -1.3z" fill="#444"/>
<rect x="655" y="161" width="9.5" height="8" fill="#999" stroke="#d2d2d2" stroke-width="0.8"/><path d="M658.2 161 V169 M661.4 161 V169 M655 163.7 H664.5 M655 166.3 H664.5" stroke="#d2d2d2" stroke-width="0.6"/>
<rect x="595" y="175.8" width="9" height="8" fill="#d8d8d8" stroke="#d2d2d2" stroke-width="0.8"/><path d="M597 182.0 Q598 176.3 602.5 177.60000000000002 Q601.5 182.8 597 182.0Z" fill="#4a4a4a"/><path d="M598.2 180.8 Q600 178.0 601.5 178.60000000000002" fill="none" stroke="#e0e0e0" stroke-width="0.7"/>
<defs><linearGradient id="dg" x1="0" y1="0" x2="1" y2="1"><stop offset="0" stop-color="#777"/><stop offset="0.3" stop-color="#ddd"/><stop offset="0.5" stop-color="#777"/><stop offset="0.7" stop-color="#ddd"/><stop offset="1" stop-color="#777"/></linearGradient></defs>
<rect x="608.5" y="175.8" width="9.5" height="8" fill="url(#dg)" stroke="#d2d2d2" stroke-width="0.8"/>
<rect x="621.8" y="175.8" width="9.5" height="8" fill="#dcdcdc" stroke="#d2d2d2" stroke-width="0.8"/><path d="M622 182.3 Q626 179.3 631 176.8 L631 179.0 Q627 181.3 622 183.8 Z" fill="#333"/>
<rect x="635" y="175.8" width="9.5" height="8" fill="#d0d0d0" stroke="#d2d2d2" stroke-width="0.8"/><path d="M635.4 176.20000000000002 L639.75 179.8 L635.4 183.4Z M644.1 176.20000000000002 L639.75 179.8 L644.1 183.4Z" fill="#6a6a6a"/>
<defs><linearGradient id="gm" x1="0" x2="1"><stop offset="0" stop-color="#555"/><stop offset="1" stop-color="#ddd"/></linearGradient></defs><rect x="649" y="175.8" width="9" height="8" fill="url(#gm)" stroke="#d2d2d2" stroke-width="0.8"/>
<rect x="567.5" y="190.6" width="135" height="2.4" fill="#2c2c2c"/>
<rect x="567.5" y="193" width="134.8" height="215" fill="#535353"/>
<rect x="567.5" y="192.8" width="134.8" height="9.0" fill="#424242"/>
<rect x="567.5" y="192.8" width="20.8" height="9.0" fill="#535353"/>
<rect x="588.3" y="192.8" width="21.0" height="9.0" fill="#3c3c3c"/>
<line x1="609.3" y1="192.8" x2="609.3" y2="201.8" stroke="#373737" stroke-width="0.8"/>
<rect x="609.3" y="192.8" width="21.0" height="9.0" fill="#3c3c3c"/>
<line x1="630.3" y1="192.8" x2="630.3" y2="201.8" stroke="#373737" stroke-width="0.8"/>
<path d="M691.9 196.4 h3 l-1.5 1.9z" fill="#bdbdbd"/><path d="M692.2 195.70000000000002 H694.7 M695.2 195.3 H700 M695.2 198.0 H700" stroke="#2a2a2a" stroke-width="0.7"/><path d="M695.2 196.4 H700 M695.2 199.0 H700" stroke="#8c8c8c" stroke-width="1"/>
<text x="571.2" y="200.1" font-size="6.8" fill="#dcdcdc" textLength="13.1" lengthAdjust="spacingAndGlyphs">图层</text>
<text x="592.2" y="200.1" font-size="6.8" fill="#a8a8a8" textLength="13.1" lengthAdjust="spacingAndGlyphs">通道</text>
<text x="613.8" y="200.1" font-size="6.8" fill="#a8a8a8" textLength="13.1" lengthAdjust="spacingAndGlyphs">路径</text>
<rect x="570.8" y="204" width="37.8" height="10.8" rx="1.5" fill="#4d4d4d" stroke="#5e5e5e" stroke-width="0.7"/>
<circle cx="578.3" cy="208.6" r="2" fill="none" stroke="#cfcfcf" stroke-width="0.9"/><path d="M576.9 210 L575 212" stroke="#cfcfcf" stroke-width="1"/>
<text x="582.8" y="212.4" font-size="7.8" fill="#d5d5d5" textLength="14.2" lengthAdjust="spacingAndGlyphs">类型</text>
<path d="M604.2 208.4 l1 -1 l1 1 M604.2 210.4 l1 1 l1 -1" fill="none" stroke="#aaa" stroke-width="0.6"/>
<rect x="621.2" y="205.5" width="7.5" height="6.5" fill="none" stroke="#a8a8a8" stroke-width="0.8"/><path d="M622.5 211 l2 -2 l1.5 1.3 l1.5 -2.5 v3.2z" fill="#a8a8a8"/>
<circle cx="638.5" cy="208.8" r="3" fill="none" stroke="#a8a8a8" stroke-width="0.9"/><path d="M636.4 210.9 A3 3 0 0 1 640.6 206.7Z" fill="#a8a8a8"/>
<text x="649.6" y="212.6" font-size="9.5" fill="#a8a8a8" style="font-family:'Liberation Serif',serif">T</text>
<rect x="663.6" y="206" width="6" height="5.5" fill="none" stroke="#a8a8a8" stroke-width="0.8"/><path d="M662.5 206 h1.8 M668.8 206 h1.8 M662.5 211.5 h1.8 M668.8 211.5 h1.8" stroke="#a8a8a8" stroke-width="0.8"/>
<path d="M676.5 212 V207.5 H679.5 L681.5 209.5 V212 Z" fill="none" stroke="#a8a8a8" stroke-width="0.8"/><rect x="679.2" y="209.3" width="3.6" height="3" fill="#a8a8a8"/>
<rect x="695.5" y="204.5" width="4.6" height="10.5" rx="0.6" fill="#474747" stroke="#3e3e3e" stroke-width="0.5"/><rect x="696" y="209.5" width="3.6" height="5" fill="#3a3a3a"/>
<line x1="567.5" y1="217.6" x2="702.3" y2="217.6" stroke="#444" stroke-width="0.9"/>
<rect x="570.8" y="220.3" width="60.2" height="10.6" rx="1.5" fill="#4d4d4d" stroke="#5e5e5e" stroke-width="0.7"/>
<text x="574.5" y="228.6" font-size="8" fill="#d5d5d5" textLength="15.5" lengthAdjust="spacingAndGlyphs">正常</text>
<path d="M626.6 224.4 l1 -1 l1 1 M626.6 226.6 l1 1 l1 -1" fill="none" stroke="#aaa" stroke-width="0.6"/>
<text x="635.5" y="228.6" font-size="8" fill="#c6c6c6" textLength="29.8" lengthAdjust="spacingAndGlyphs">不透明度:</text>
<rect x="668" y="220.8" width="21" height="10.2" fill="#474747" stroke="#404040" stroke-width="0.6"/>
<text x="670" y="228.5" font-size="7.3" fill="#777" textLength="16.5" lengthAdjust="spacingAndGlyphs">100%</text>
<rect x="689.3" y="220.8" width="9.7" height="10.2" fill="#5a5a5a" stroke="#454545" stroke-width="0.6"/><path d="M692.6 225.9 h3 l-1.5 1z" fill="#ddd" stroke="#ddd" stroke-width="0.4"/>
<line x1="567.5" y1="233.8" x2="702.3" y2="233.8" stroke="#444" stroke-width="0.9"/>
<text x="571" y="243.6" font-size="8" fill="#a8a8a8" textLength="17" lengthAdjust="spacingAndGlyphs">锁定:</text>
<rect x="594.3" y="238.5" width="5.5" height="5.5" fill="none" stroke="#a2a2a2" stroke-width="0.7"/><path d="M594.3 240.3 h5.5 M594.3 242.2 h5.5 M596.1 238.5 v5.5 M598 238.5 v5.5" stroke="#a2a2a2" stroke-width="0.5"/>
<path d="M605 244 Q605.5 241.5 607 242 L612 236.8" fill="none" stroke="#a2a2a2" stroke-width="0.9"/><path d="M604 244.5 Q605 242 607 242.5 Q606.5 244.5 604 244.5Z" fill="#a2a2a2"/>
<path d="M620 237 V245 M616 241 H624 M619 238 l1 -1 l1 1 M619 244 l1 1 l1 -1 M617 240 l-1 1 l1 1 M623 240 l1 1 l-1 1" fill="none" stroke="#a2a2a2" stroke-width="0.8"/>
<rect x="629.6" y="240.3" width="5.4" height="4.6" fill="#a2a2a2"/><path d="M630.8 240.5 V239 A1.5 1.5 0 0 1 633.8 239 V240.5" fill="none" stroke="#a2a2a2" stroke-width="0.9"/>
<text x="650" y="243.6" font-size="8" fill="#a8a8a8" textLength="15.5" lengthAdjust="spacingAndGlyphs">填充:</text>
<rect x="668" y="236.8" width="21" height="10" fill="#474747" stroke="#404040" stroke-width="0.6"/>
<text x="670" y="244.4" font-size="7.3" fill="#777" textLength="16.5" lengthAdjust="spacingAndGlyphs">100%</text>
<rect x="689.3" y="236.8" width="9.7" height="9.8" fill="#5a5a5a" stroke="#454545" stroke-width="0.6"/><path d="M692.6 241.8 h3 l-1.5 1z" fill="#ddd" stroke="#ddd" stroke-width="0.4"/>
<rect x="567.5" y="248.6" width="127" height="146.2" fill="#4b4b4b"/>
<line x1="567.5" y1="249.2" x2="694.2" y2="249.2" stroke="#3a3a3a" stroke-width="1"/>
<rect x="694.2" y="248.6" width="8.1" height="146.2" fill="#464646"/>
<line x1="694.6" y1="248.6" x2="694.6" y2="394.8" stroke="#3d3d3d" stroke-width="0.8"/>
<rect x="567.5" y="249.8" width="126.7" height="22.099999999999966" fill="#535353"/>
<rect x="584.6" y="249.8" width="109.6" height="22.099999999999966" fill="#6a7d98"/>
<line x1="567.5" y1="271.9" x2="694.2" y2="271.9" stroke="#3e3e3e" stroke-width="0.9"/>
<line x1="584.3" y1="249.8" x2="584.3" y2="271.9" stroke="#3e3e3e" stroke-width="0.8"/>
<path d="M572.2 261.15000000000003 Q576 256.85 579.8 261.15000000000003 Q576 264.15000000000003 572.2 261.15000000000003Z" fill="none" stroke="#cdcdcd" stroke-width="0.9"/><circle cx="576" cy="260.85" r="1.5" fill="#cdcdcd"/>
<rect x="567.5" y="271.9" width="126.7" height="21.400000000000034" fill="#535353"/>
<line x1="567.5" y1="293.3" x2="694.2" y2="293.3" stroke="#3e3e3e" stroke-width="0.9"/>
<line x1="584.3" y1="271.9" x2="584.3" y2="293.3" stroke="#3e3e3e" stroke-width="0.8"/>
<path d="M572.2 282.90000000000003 Q576 278.6 579.8 282.90000000000003 Q576 285.90000000000003 572.2 282.90000000000003Z" fill="none" stroke="#cdcdcd" stroke-width="0.9"/><circle cx="576" cy="282.6" r="1.5" fill="#cdcdcd"/>
<rect x="567.5" y="293.3" width="126.7" height="21.899999999999977" fill="#535353"/>
<line x1="567.5" y1="315.2" x2="694.2" y2="315.2" stroke="#3e3e3e" stroke-width="0.9"/>
<line x1="584.3" y1="293.3" x2="584.3" y2="315.2" stroke="#3e3e3e" stroke-width="0.8"/>
<path d="M572.2 304.55 Q576 300.25 579.8 304.55 Q576 307.55 572.2 304.55Z" fill="none" stroke="#cdcdcd" stroke-width="0.9"/><circle cx="576" cy="304.25" r="1.5" fill="#cdcdcd"/>
<rect x="567.5" y="315.2" width="126.7" height="21.80000000000001" fill="#535353"/>
<line x1="567.5" y1="337" x2="694.2" y2="337" stroke="#3e3e3e" stroke-width="0.9"/>
<line x1="584.3" y1="315.2" x2="584.3" y2="337" stroke="#3e3e3e" stroke-width="0.8"/>
<path d="M572.2 326.40000000000003 Q576 322.1 579.8 326.40000000000003 Q576 329.40000000000003 572.2 326.40000000000003Z" fill="none" stroke="#cdcdcd" stroke-width="0.9"/><circle cx="576" cy="326.1" r="1.5" fill="#cdcdcd"/>
<defs><pattern id="chk" x="0" y="0" width="3" height="3" patternUnits="userSpaceOnUse"><rect width="3" height="3" fill="#fff"/><rect width="1.5" height="1.5" fill="#d6d6d6"/><rect x="1.5" y="1.5" width="1.5" height="1.5" fill="#d6d6d6"/></pattern></defs>
<path d="M586.8 252.7 H600.6 V262.5 H593.9 V269.0 H586.8 Z" fill="url(#chk)" stroke="#1e1e1e" stroke-width="0.9"/>
<circle cx="593.6" cy="258.09999999999997" r="4.3" fill="none" stroke="#5cb8ea" stroke-width="0.9"/>
<rect x="595.2" y="263.7" width="5.6" height="5" fill="none" stroke="#c8ccd4" stroke-width="0.7"/><rect x="596.6" y="265.0" width="2.8" height="2.4" fill="none" stroke="#9aa0aa" stroke-width="0.5"/>
<path d="M585.3 255.2 V251.0 H589 M598 251.0 H601.8 V255.2 M585.3 266.2 V269.9 H589 M598 269.9 H601.8 V266.2" fill="none" stroke="#dfe6ef" stroke-width="0.8"/>
<path d="M586.8 274.8 H600.6 V284.6 H593.9 V291.1 H586.8 Z" fill="url(#chk)" stroke="#1e1e1e" stroke-width="0.9"/>
<circle cx="593.6" cy="280.2" r="4.3" fill="none" stroke="#5cb8ea" stroke-width="0.9"/>
<rect x="595.2" y="285.8" width="5.6" height="5" fill="none" stroke="#c8ccd4" stroke-width="0.7"/><rect x="596.6" y="287.1" width="2.8" height="2.4" fill="none" stroke="#9aa0aa" stroke-width="0.5"/>
<text x="605.7" y="264.9" font-size="8" fill="#ffffff" textLength="34.5" lengthAdjust="spacingAndGlyphs">椭圆 1 拷贝</text>
<text x="605.7" y="286.6" font-size="8" fill="#e0e0e0" textLength="20.6" lengthAdjust="spacingAndGlyphs">椭圆 1</text>
<rect x="586.4" y="296" width="13.9" height="16.8" fill="#fbcc8c" stroke="#3a3a3a" stroke-width="0.4"/>
<text x="606" y="308" font-size="8" fill="#e0e0e0" textLength="20.6" lengthAdjust="spacingAndGlyphs">图层 1</text>
<rect x="586.4" y="318" width="13.9" height="16.6" fill="#ffffff" stroke="#3a3a3a" stroke-width="0.4"/>
<text x="607" y="329.8" font-size="8" fill="#e0e0e0" textLength="13.5" lengthAdjust="spacingAndGlyphs" font-style="italic" transform="skewX(-12) translate(70.5 0)">背景</text>
<rect x="678.2" y="325.6" width="5.6" height="4.8" fill="none" stroke="#c0c0c0" stroke-width="0.8"/><path d="M679.5 325.6 V324 A1.5 1.5 0 0 1 682.5 324 V325.6" fill="none" stroke="#c0c0c0" stroke-width="0.8"/><rect x="680.3" y="327" width="1.4" height="2" fill="#c0c0c0"/>
<g fill="#e3e3e3"><ellipse cx="589.8" cy="372" rx="8.8" ry="7.6"/><path d="M584 377 L582.5 382 L588 378.5Z"/></g><g fill="#4b4b4b"><circle cx="587" cy="370" r="1.2"/><circle cx="592.7" cy="370" r="1.2"/></g><ellipse cx="599" cy="379.5" rx="9.8" ry="8.4" fill="#4b4b4b"/><g fill="#e3e3e3"><ellipse cx="599" cy="379.5" rx="8.6" ry="7.4"/><path d="M604 385 L606.8 388.5 L601 386Z"/></g><g fill="#4b4b4b"><circle cx="596" cy="377.5" r="1.2"/><circle cx="602" cy="377.5" r="1.2"/></g>
<text x="613" y="383.4" font-size="17" fill="#e6e6e6" textLength="68" lengthAdjust="spacingAndGlyphs" font-weight="500">极微设计</text>
<rect x="567.5" y="394.8" width="134.8" height="13.2" fill="#535353"/>
<line x1="567.5" y1="394.9" x2="702.3" y2="394.9" stroke="#3e3e3e" stroke-width="0.8"/>
<path d="M590 399.3 h-1.2 a2 2 0 0 0 0 4 h1.2 M593 399.3 h1.2 a2 2 0 0 1 0 4 h-1.2 M590 401.3 h3" fill="none" stroke="#aaaaaa" stroke-width="0.8"/>
<text x="604" y="404.3" font-size="8" fill="#c4c4c4" textLength="8" lengthAdjust="spacingAndGlyphs" font-style="italic">fx</text>
<rect x="612.5" y="403.4" width="1" height="1" fill="#aaaaaa"/>
<rect x="619.5" y="398.5" width="8" height="6.2" fill="#c8c8c8"/><circle cx="623.5" cy="401.6" r="1.7" fill="#535353"/>
<circle cx="637.5" cy="401.5" r="3" fill="#c8c8c8"/><path d="M635.4 403.6 A3 3 0 0 1 639.6 399.4Z" fill="#535353"/><rect x="641.5" y="404" width="1" height="1" fill="#aaaaaa"/>
<path d="M649.5 404.8 V398.5 H652 L653 399.5 H656.5 V404.8 Z" fill="#c8c8c8"/>
<rect x="666" y="398.4" width="7" height="6.5" fill="#c8c8c8"/><path d="M666.5 404.5 L669 402 V404.5Z" fill="#535353"/>
<path d="M680 399.5 h6 M682 399.5 v-1 h2 v1 M680.8 400.3 h4.4 v4.6 h-4.4z" fill="none" stroke="#c8c8c8" stroke-width="0.8"/><path d="M682 401.2 v3 M684 401.2 v3" stroke="#c8c8c8" stroke-width="0.5"/>
<rect x="701.9" y="43.6" width="1.4" height="364.4" fill="#2c2c2c"/><rect x="703.3" y="37" width="1.7" height="371" fill="#474747"/>
</svg>
</body></html>
